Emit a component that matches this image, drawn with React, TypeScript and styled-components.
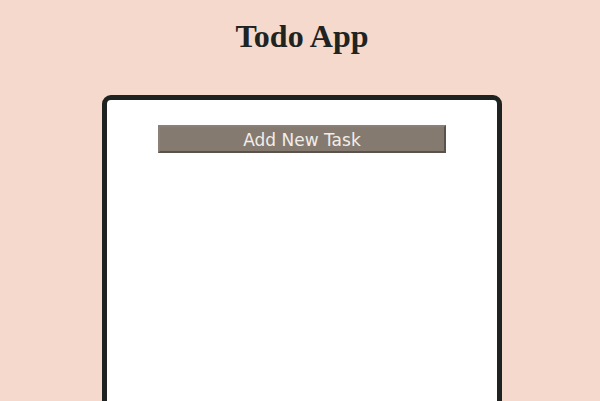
import React from "react";
import styled, { createGlobalStyle } from "styled-components";

const GlobalStyle = createGlobalStyle`
  html, body {
    margin: 0;
    padding: 0;
    background: #f4d9cc;
    overflow: hidden;
  }
`;

const Page = styled.div`
  display: flex;
  flex-direction: column;
  align-items: center;
  padding-top: 18px;
  padding-left: 4px;
  min-height: 401px;
  box-sizing: border-box;
`;

const Title = styled.h1`
  margin: 0;
  font-family: "Liberation Serif", "Times New Roman", serif;
  font-size: 32px;
  font-weight: bold;
  color: #1f2321;
`;

const Card = styled.div`
  margin-top: 40px;
  width: 400px;
  height: 420px;
  box-sizing: border-box;
  background: #ffffff;
  border: 5px solid #1e2220;
  border-radius: 9px;
  padding-top: 25px;
  display: flex;
  flex-direction: column;
  align-items: center;
`;

const AddButton = styled.button`
  width: 288px;
  height: 28px;
  box-sizing: border-box;
  padding: 2px 0 0;
  background: #857a70;
  color: #f1ede9;
  border: 2px solid;
  border-color: #8b8077 #5b524b #5b524b #8b8077;
  font-family: "DejaVu Sans", Verdana, sans-serif;
  font-size: 17px;
  line-height: 22px;
  cursor: pointer;
`;

export default function App() {
  return (
    <>
      <GlobalStyle />
      <Page>
        <Title>Todo App</Title>
        <Card>
          <AddButton>Add New Task</AddButton>
        </Card>
      </Page>
    </>
  );
}
